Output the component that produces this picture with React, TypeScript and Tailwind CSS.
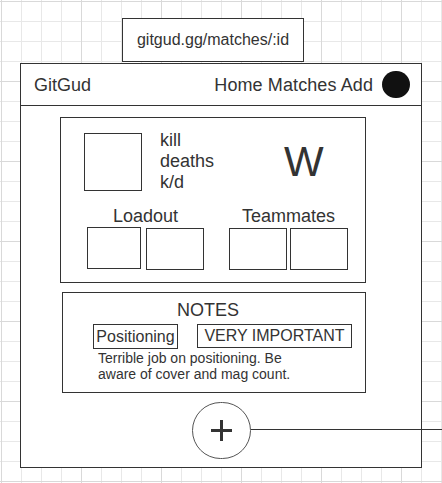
import React from "react";

function Box({ w, h, className = "" }: { w: string; h: string; className?: string }) {
  return <div className={`${w} ${h} border border-[#333] bg-white ${className}`} />;
}

export default function App() {
  return (
    <div className="relative w-[442px] h-[483px] overflow-hidden bg-white text-[#333] [font-family:'Liberation_Sans',Arial,Helvetica,sans-serif] bg-[linear-gradient(#d9d9d9_1px,transparent_1px),linear-gradient(90deg,#d9d9d9_1px,transparent_1px),linear-gradient(#e8e8e8_1px,transparent_1px),linear-gradient(90deg,#e8e8e8_1px,transparent_1px)] [background-size:80px_80px,80px_80px,20px_20px,20px_20px] [background-position:1px_1px]">
      {/* URL label */}
      <div className="pt-[18px] pl-[122px]">
        <div className="w-[182px] h-[44px] border border-[#333] bg-white flex items-center justify-center text-[16px] leading-[18px]">
          gitgud.gg/matches/:id
        </div>
      </div>

      {/* Main frame */}
      <div className="ml-[20px] mt-[1px] w-[402px] h-[405px] border border-[#333] bg-white flex flex-col">
        {/* Header */}
        <div className="h-[42px] shrink-0 border-b border-[#333] flex items-center justify-between pl-[13px] pr-[11px] text-[18px] leading-[20px]">
          <span>GitGud</span>
          <div className="flex items-center gap-[9px]">
            <span className="tracking-[0.1px]">Home Matches Add</span>
            <div className="w-[28px] h-[27px] rounded-full bg-[#111]" />
          </div>
        </div>

        {/* Stats card */}
        <div className="ml-[39px] mt-[11px] w-[306px] h-[166px] shrink-0 border border-[#333] flex flex-col">
          <div className="flex h-[58px] mt-[15px] ml-[23px] shrink-0">
            <Box w="w-[58px]" h="h-[58px]" />
            <div className="ml-[18px] -mt-[3px] w-[124px] self-start text-[18px] leading-[21px]">
              <div>kill</div>
              <div>deaths</div>
              <div>k/d</div>
            </div>
            <div className="mt-[8px] self-start text-[42px] leading-[42px]">W</div>
          </div>
          <div className="flex mt-[15px] ml-[26px] gap-[25px]">
            <div className="flex flex-col items-center">
              <div className="text-[18px] leading-[20px]">Loadout</div>
              <div className="flex gap-[5px] mt-[1px] items-start">
                <Box w="w-[54px]" h="h-[42px]" />
                <Box w="w-[58px]" h="h-[42px]" className="mt-[1px]" />
              </div>
            </div>
            <div className="flex flex-col items-center">
              <div className="text-[18px] leading-[20px]">Teammates</div>
              <div className="flex gap-[3px] mt-[2px]">
                <Box w="w-[58px]" h="h-[42px]" />
                <Box w="w-[58px]" h="h-[42px]" />
              </div>
            </div>
          </div>
        </div>

        {/* Notes card */}
        <div className="ml-[41px] mt-[9px] w-[304px] h-[101px] shrink-0 border border-[#333] flex flex-col">
          <div className="pt-[7px] pl-[114px] text-[18px] leading-[20px]">NOTES</div>
          <div className="flex mt-[4px] pl-[30px] items-start text-[16px] leading-[18px]">
            <div className="w-[85px] h-[25px] border border-[#333] flex items-center justify-center">
              Positioning
            </div>
            <div className="ml-[19px] w-[155px] h-[24px] border border-[#333] flex items-center justify-center">
              VERY IMPORTANT
            </div>
          </div>
          <div className="pl-[35px] text-[14px] leading-[16px] mt-[1px]">
            <div>Terrible job on positioning. Be</div>
            <div>aware of cover and mag count.</div>
          </div>
        </div>

        {/* Add button */}
        <div className="ml-[171px] mt-[9px] w-[59px] h-[57px] shrink-0 rounded-full border border-[#555] bg-white flex items-center justify-center">
          <svg width="23" height="23" viewBox="0 0 23 23">
            <line x1="11.5" y1="1" x2="11.5" y2="22" stroke="#333" strokeWidth="3" />
            <line x1="1" y1="11.5" x2="22" y2="11.5" stroke="#333" strokeWidth="3" />
          </svg>
        </div>
      </div>

      {/* Connector line */}
      <div className="absolute left-[251px] top-[429px] w-[191px] h-[1px] bg-[#333]" />
    </div>
  );
}
